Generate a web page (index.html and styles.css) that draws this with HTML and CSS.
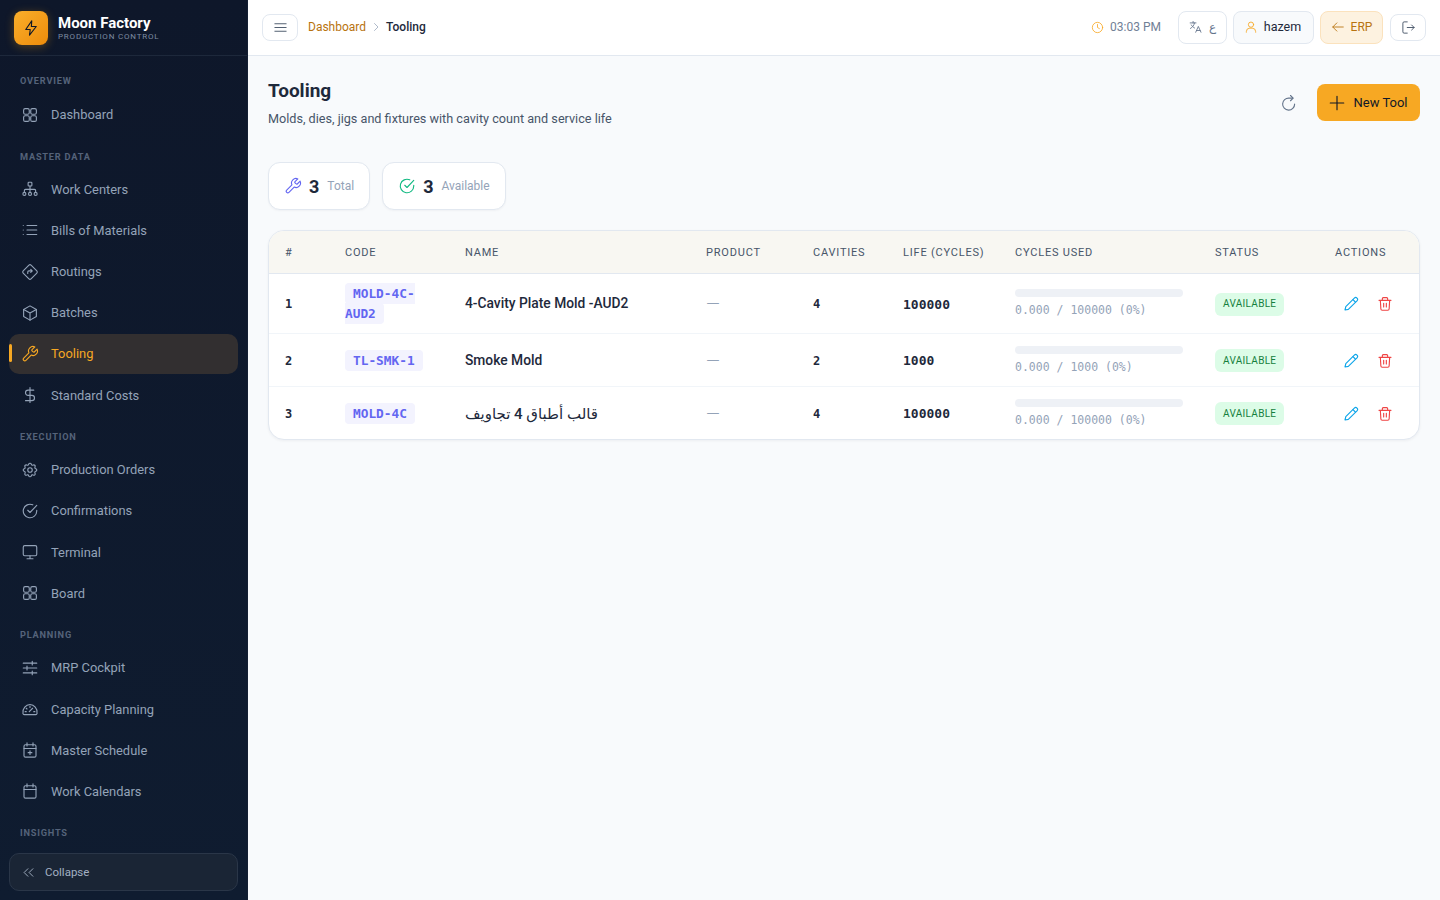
FILE: index.html
```html
<!DOCTYPE html>
<html lang="en">
<head>
  <meta charset="UTF-8">
  <meta name="viewport" content="width=device-width, initial-scale=1.0">
  <title>Tooling - Moon Factory</title>
  <link rel="stylesheet" href="styles.css">
</head>
<body>
  <!-- Icon sprite -->
  <svg class="sprite" xmlns="http://www.w3.org/2000/svg">
    <symbol id="i-grid" viewBox="0 0 24 24"><rect x="3.5" y="3.5" width="7.5" height="7.5" rx="2"/><rect x="13" y="3.5" width="7.5" height="7.5" rx="2"/><rect x="3.5" y="13" width="7.5" height="7.5" rx="2"/><rect x="13" y="13" width="7.5" height="7.5" rx="2"/></symbol>
    <symbol id="i-tree" viewBox="0 0 24 24"><rect x="9.5" y="3" width="5" height="5" rx="1"/><circle cx="4.5" cy="18.5" r="2"/><circle cx="12" cy="18.5" r="2"/><circle cx="19.5" cy="18.5" r="2"/><path d="M12 8v8.500M4.500 16.500V14a1.500 1.500 0 0 1 1.500-1.500h12a1.500 1.500 0 0 1 1.500 1.500v2.500"/></symbol>
    <symbol id="i-list" viewBox="0 0 24 24"><path d="M8 6h13M8 12h13M8 18h13M3 6h.01M3 12h.01M3 18h.01"/></symbol>
    <symbol id="i-route" viewBox="0 0 24 24"><path d="M10.600 2.900a2 2 0 0 1 2.800 0l7.700 7.700a2 2 0 0 1 0 2.800l-7.700 7.700a2 2 0 0 1-2.800 0l-7.700-7.700a2 2 0 0 1 0-2.800z"/><path d="M9 14v-2a1.500 1.500 0 0 1 1.500-1.500H15M13 8.500l2 2-2 2"/></symbol>
    <symbol id="i-box" viewBox="0 0 24 24"><path d="M12 2.500l8.500 4.800v9.400L12 21.500l-8.500-4.800V7.300z"/><path d="M3.500 7.300L12 12l8.500-4.700M12 12v9.500"/></symbol>
    <symbol id="i-tool" viewBox="0 0 24 24"><path d="M14.700 6.300a1 1 0 0 0 0 1.400l1.600 1.600a1 1 0 0 0 1.400 0l3.770-3.770a6 6 0 0 1-7.940 7.940l-6.910 6.910a2.120 2.120 0 0 1-3-3l6.910-6.910a6 6 0 0 1 7.940-7.940l-3.760 3.760z"/></symbol>
    <symbol id="i-dollar" viewBox="0 0 24 24"><path d="M12 2v20M17 5.500H9.500a3.500 3.500 0 0 0 0 7h5a3.500 3.500 0 0 1 0 7H6"/></symbol>
    <symbol id="i-gear" viewBox="0 0 24 24"><path d="M10.300 4.300c.4-1.800 3-1.800 3.400 0a1.700 1.700 0 0 0 2.600 1.100c1.500-.9 3.300.8 2.400 2.400a1.700 1.700 0 0 0 1 2.500c1.800.4 1.800 3 0 3.400a1.700 1.700 0 0 0-1 2.600c.9 1.500-.9 3.300-2.400 2.400a1.700 1.700 0 0 0-2.600 1c-.4 1.800-3 1.800-3.400 0a1.700 1.700 0 0 0-2.600-1c-1.500.9-3.300-.9-2.400-2.400a1.700 1.700 0 0 0-1-2.600c-1.800-.4-1.800-3 0-3.400a1.700 1.700 0 0 0 1-2.500c-.9-1.600.9-3.300 2.400-2.400a1.700 1.700 0 0 0 2.600-1.100z"/><circle cx="12" cy="12" r="3"/></symbol>
    <symbol id="i-check" viewBox="0 0 24 24"><path d="M21 11.100v.9a9 9 0 1 1-5.300-8.200"/><path d="M9 11l3 3 9-9.500"/></symbol>
    <symbol id="i-screen" viewBox="0 0 24 24"><rect x="3" y="3.500" width="18" height="13.500" rx="2"/><path d="M8 21h8M12 17v4"/></symbol>
    <symbol id="i-sliders" viewBox="0 0 24 24"><path d="M3 5.500h18M3 12h18M3 18.500h18M15 3v5M8 9.500v5M15 16v5"/></symbol>
    <symbol id="i-gauge" viewBox="0 0 24 24"><path d="M4.500 19.500h15a2 2 0 0 0 1.800-2.700A9.800 9.800 0 0 0 12 6a9.800 9.800 0 0 0-9.300 10.800 2 2 0 0 0 1.800 2.700z"/><path d="M11 15.500l4.500-4.500M7 11l1 1M12 8.500v1.500M5.500 15.500H7M17 15.500h1.500"/></symbol>
    <symbol id="i-calplus" viewBox="0 0 24 24"><rect x="4" y="5" width="16" height="16.500" rx="2"/><path d="M8 2.500v4M16 2.500v4M4 10h16M12 13v5M9.500 15.500h5"/></symbol>
    <symbol id="i-cal" viewBox="0 0 24 24"><rect x="4" y="5" width="16" height="16.500" rx="2"/><path d="M8 2.500v4M16 2.500v4M4 10h16"/></symbol>
    <symbol id="i-chevrons" viewBox="0 0 24 24"><path d="M11 6L5 12l6 6M19 6l-6 6 6 6"/></symbol>
    <symbol id="i-menu" viewBox="0 0 24 24"><path d="M3 6h18M3 12h18M3 18h18"/></symbol>
    <symbol id="i-chev" viewBox="0 0 24 24"><path d="M9 5l7 7-7 7"/></symbol>
    <symbol id="i-clock" viewBox="0 0 24 24"><circle cx="12" cy="12" r="9.500"/><path d="M12 6.500V12l3.500 2"/></symbol>
    <symbol id="i-lang" viewBox="0 0 24 24"><path d="M2 5h10M7 2.500V5M9.500 5c-1 4.500-3.500 7.500-7 9.500M4 8.500c1.200 2.300 3 4 5.500 5.200M11.500 21l4.500-10 4.500 10M13 18h6"/></symbol>
    <symbol id="i-user" viewBox="0 0 24 24"><circle cx="12" cy="8" r="4.500"/><path d="M4 21v-1a6 6 0 0 1 6-6h4a6 6 0 0 1 6 6v1"/></symbol>
    <symbol id="i-back" viewBox="0 0 24 24"><path d="M21 12H3M10 5l-7 7 7 7"/></symbol>
    <symbol id="i-logout" viewBox="0 0 24 24"><path d="M10 3H5a2 2 0 0 0-2 2v14a2 2 0 0 0 2 2h5M10 12h11M17 8l4 4-4 4"/></symbol>
    <symbol id="i-refresh" viewBox="0 0 24 24"><path d="M19.500 13.500A8 8 0 1 1 12 5.500h5"/><path d="M14 2l3.500 3.500L14 9"/></symbol>
    <symbol id="i-plus" viewBox="0 0 24 24"><path d="M12 3v18M3 12h18"/></symbol>
    <symbol id="i-pencil" viewBox="0 0 24 24"><path d="M3 21l1.200-5L17 3.200a2.800 2.800 0 0 1 4 4L8 20z"/><path d="M15 5.500l3.500 3.500"/></symbol>
    <symbol id="i-trash" viewBox="0 0 24 24"><path d="M3 6.500h18M8 6.500V4a1.500 1.500 0 0 1 1.500-1.500h5A1.500 1.500 0 0 1 16 4v2.500M5 6.500l.8 13a2 2 0 0 0 2 1.900h8.400a2 2 0 0 0 2-1.900l.8-13M10 11v5.500M14 11v5.500"/></symbol>
    <symbol id="i-bolt" viewBox="0 0 24 24"><path d="M13 2.500L5 14h6l-1 7.500L19 10h-6.500z"/></symbol>
  </svg>

  <div class="app">
    <aside class="sidebar">
      <div class="brand">
        <div class="brand-logo"><svg class="icon"><use href="#i-bolt"/></svg></div>
        <div class="brand-text">
          <div class="brand-name">Moon Factory</div>
          <div class="brand-sub">PRODUCTION CONTROL</div>
        </div>
      </div>

      <nav class="side-nav">
        <div class="nav-label nav-label-first">OVERVIEW</div>
        <a class="nav-item" href="#"><svg class="icon"><use href="#i-grid"/></svg>Dashboard</a>

        <div class="nav-label">MASTER DATA</div>
        <a class="nav-item" href="#"><svg class="icon"><use href="#i-tree"/></svg>Work Centers</a>
        <a class="nav-item" href="#"><svg class="icon"><use href="#i-list"/></svg>Bills of Materials</a>
        <a class="nav-item" href="#"><svg class="icon"><use href="#i-route"/></svg>Routings</a>
        <a class="nav-item" href="#"><svg class="icon"><use href="#i-box"/></svg>Batches</a>
        <a class="nav-item active" href="#"><svg class="icon"><use href="#i-tool"/></svg>Tooling</a>
        <a class="nav-item" href="#"><svg class="icon"><use href="#i-dollar"/></svg>Standard Costs</a>

        <div class="nav-label">EXECUTION</div>
        <a class="nav-item" href="#"><svg class="icon"><use href="#i-gear"/></svg>Production Orders</a>
        <a class="nav-item" href="#"><svg class="icon"><use href="#i-check"/></svg>Confirmations</a>
        <a class="nav-item" href="#"><svg class="icon"><use href="#i-screen"/></svg>Terminal</a>
        <a class="nav-item" href="#"><svg class="icon"><use href="#i-grid"/></svg>Board</a>

        <div class="nav-label">PLANNING</div>
        <a class="nav-item" href="#"><svg class="icon"><use href="#i-sliders"/></svg>MRP Cockpit</a>
        <a class="nav-item" href="#"><svg class="icon"><use href="#i-gauge"/></svg>Capacity Planning</a>
        <a class="nav-item" href="#"><svg class="icon"><use href="#i-calplus"/></svg>Master Schedule</a>
        <a class="nav-item" href="#"><svg class="icon"><use href="#i-cal"/></svg>Work Calendars</a>

        <div class="nav-label">INSIGHTS</div>
      </nav>

      <div class="side-foot">
        <button class="collapse-btn"><svg class="icon"><use href="#i-chevrons"/></svg>Collapse</button>
      </div>
    </aside>

    <div class="main">
      <header class="topbar">
        <button class="btn-box menu-btn"><svg class="icon"><use href="#i-menu"/></svg></button>
        <div class="crumbs">
          <a href="#">Dashboard</a>
          <svg class="icon"><use href="#i-chev"/></svg>
          <span>Tooling</span>
        </div>
        <div class="topbar-right">
          <div class="clock"><svg class="icon"><use href="#i-clock"/></svg>03:03 PM</div>
          <button class="btn-box lang-btn"><svg class="icon"><use href="#i-lang"/></svg><span>ع</span></button>
          <button class="btn-box user-btn"><svg class="icon"><use href="#i-user"/></svg>hazem</button>
          <button class="btn-box erp-btn"><svg class="icon"><use href="#i-back"/></svg>ERP</button>
          <button class="btn-box menu-btn logout-btn"><svg class="icon"><use href="#i-logout"/></svg></button>
        </div>
      </header>

      <main class="content">
        <div class="page-head">
          <div>
            <h1>Tooling</h1>
            <p>Molds, dies, jigs and fixtures with cavity count and service life</p>
          </div>
          <div class="page-actions">
            <button class="refresh-btn"><svg class="icon"><use href="#i-refresh"/></svg></button>
            <button class="primary-btn"><svg class="icon"><use href="#i-plus"/></svg>New Tool</button>
          </div>
        </div>

        <div class="stats">
          <div class="stat"><svg class="icon stat-tool"><use href="#i-tool"/></svg><b>3</b><span>Total</span></div>
          <div class="stat"><svg class="icon stat-ok"><use href="#i-check"/></svg><b>3</b><span>Available</span></div>
        </div>

        <div class="table-card">
          <table>
            <thead>
              <tr>
                <th class="col-num">#</th>
                <th class="col-code">CODE</th>
                <th class="col-name">NAME</th>
                <th class="col-product">PRODUCT</th>
                <th class="col-cav">CAVITIES</th>
                <th class="col-life">LIFE (CYCLES)</th>
                <th class="col-used">CYCLES USED</th>
                <th class="col-status">STATUS</th>
                <th class="col-actions">ACTIONS</th>
              </tr>
            </thead>
            <tbody>
              <tr>
                <td class="num">1</td>
                <td><code>MOLD-4C-AUD2</code></td>
                <td class="name">4-Cavity Plate Mold -AUD2</td>
                <td class="dash">—</td>
                <td class="num">4</td>
                <td class="life">100000</td>
                <td class="used-cell"><div class="bar"></div><div class="used">0.000 / 100000 (0%)</div></td>
                <td><span class="badge">AVAILABLE</span></td>
                <td><div class="actions"><svg class="icon edit"><use href="#i-pencil"/></svg><svg class="icon del"><use href="#i-trash"/></svg></div></td>
              </tr>
              <tr>
                <td class="num">2</td>
                <td><code>TL-SMK-1</code></td>
                <td class="name">Smoke Mold</td>
                <td class="dash">—</td>
                <td class="num">2</td>
                <td class="life">1000</td>
                <td class="used-cell"><div class="bar"></div><div class="used">0.000 / 1000 (0%)</div></td>
                <td><span class="badge">AVAILABLE</span></td>
                <td><div class="actions"><svg class="icon edit"><use href="#i-pencil"/></svg><svg class="icon del"><use href="#i-trash"/></svg></div></td>
              </tr>
              <tr>
                <td class="num">3</td>
                <td><code>MOLD-4C</code></td>
                <td class="name name-ar" dir="rtl">قالب أطباق 4 تجاويف</td>
                <td class="dash">—</td>
                <td class="num">4</td>
                <td class="life">100000</td>
                <td class="used-cell"><div class="bar"></div><div class="used">0.000 / 100000 (0%)</div></td>
                <td><span class="badge">AVAILABLE</span></td>
                <td><div class="actions"><svg class="icon edit"><use href="#i-pencil"/></svg><svg class="icon del"><use href="#i-trash"/></svg></div></td>
              </tr>
            </tbody>
          </table>
        </div>
      </main>
    </div>
  </div>
</body>
</html>
```

FILE: styles.css
```css
* {
  padding: 0;
  margin: 0;
  box-sizing: border-box;
}

body {
  font-family: Roboto, "DejaVu Sans", sans-serif;
  font-size: 13px;
  color: #1e293b;
  background-color: #f8fafc;
  height: 900px;
  overflow: hidden;
}

.sprite {
  display: none;
}

.icon {
  width: 18px;
  height: 18px;
  flex: none;
  fill: none;
  stroke: currentColor;
  stroke-width: 1.5;
  stroke-linecap: round;
  stroke-linejoin: round;
}

button {
  font-family: inherit;
  cursor: pointer;
}

a {
  text-decoration: none;
}

.app {
  display: flex;
  height: 900px;
}

/* Sidebar */
.sidebar {
  width: 248px;
  flex: none;
  display: flex;
  flex-direction: column;
  height: 900px;
  background: linear-gradient(180deg, #0e172a, #0f1c30);
  overflow: hidden;
  border-right: 1px solid #141f33;
}

.brand {
  height: 56px;
  flex: none;
  display: flex;
  align-items: center;
  gap: 10px;
  padding-left: 14px;
  border-bottom: 1px solid #1d283b;
}

.brand-logo {
  width: 34px;
  height: 34px;
  border-radius: 8px;
  background: linear-gradient(135deg, #f9ae2b, #ee8c0b);
  box-shadow: 0 2px 10px rgba(245, 158, 11, 0.3);
  display: flex;
  align-items: center;
  justify-content: center;
  color: #111827;
}

.brand-text {
  padding-top: 2px;
}

.brand-name {
  font-size: 15px;
  font-weight: 700;
  line-height: 15px;
  color: #fff;
}

.brand-sub {
  font-size: 8px;
  line-height: 11px;
  letter-spacing: 0.8px;
  color: #7c8ba1;
}

.side-nav {
  flex: 1;
  min-height: 0;
  overflow: hidden;
  padding: 0 9px;
}

.nav-label {
  font-size: 9.200px;
  font-weight: 700;
  letter-spacing: 0.8px;
  line-height: 12px;
  color: #55637a;
  padding: 14.400px 0 7px 11px;
}

.nav-label-first {
  padding-top: 19px;
  padding-bottom: 8px;
}

.nav-item {
  position: relative;
  display: flex;
  align-items: center;
  gap: 12px;
  height: 39.200px;
  margin-bottom: 2px;
  padding-left: 12px;
  border-radius: 10px;
  font-size: 12.900px;
  color: #94a3b8;
}

.nav-item.active {
  background-color: #322f30;
  color: #f7a823;
}

.nav-item.active::before {
  content: "";
  position: absolute;
  left: 0;
  top: 10px;
  width: 3px;
  height: 18px;
  border-radius: 2px;
  background-color: #f7a823;
}

.side-foot {
  flex: none;
  height: 47px;
  padding: 0 9px;
  position: relative;
}

.collapse-btn {
  width: 100%;
  height: 38px;
  display: flex;
  align-items: center;
  gap: 9px;
  padding-left: 11px;
  font-size: 11.500px;
  color: #a3b0c2;
  background-color: #1a2535;
  border: 1px solid #2a3648;
  border-radius: 10px;
}

.collapse-btn .icon {
  width: 15px;
  height: 15px;
}

/* Top bar */
.main {
  flex: 1;
  min-width: 0;
  display: flex;
  flex-direction: column;
}

.topbar {
  height: 56px;
  flex: none;
  display: flex;
  align-items: center;
  padding: 0 14px;
  background-color: #fff;
  border-bottom: 1px solid #e2e8f0;
}

.btn-box {
  height: 33px;
  display: flex;
  align-items: center;
  gap: 6px;
  padding-bottom: 2px;
  background-color: #fff;
  border: 1px solid #e2e8f0;
  border-radius: 8px;
  font-size: 12px;
  color: #64748b;
}

.menu-btn {
  width: 36px;
  height: 27px;
  justify-content: center;
  padding-bottom: 0;
  color: #475569;
}

.menu-btn .icon {
  width: 15px;
  height: 15px;
}

.logout-btn {
  margin-left: 1px;
}

.crumbs {
  display: flex;
  align-items: center;
  gap: 4px;
  margin-left: 10px;
  padding-bottom: 2px;
  font-size: 12px;
}

.crumbs a {
  color: #b8730f;
}

.crumbs .icon {
  width: 12px;
  height: 12px;
  color: #94a3b8;
}

.crumbs span {
  font-weight: 500;
  color: #1e293b;
}

.topbar-right {
  margin-left: auto;
  display: flex;
  align-items: center;
  gap: 6px;
}

.clock {
  display: flex;
  align-items: center;
  gap: 6px;
  margin-right: 11px;
  padding-bottom: 1px;
  font-size: 12px;
  color: #718096;
}

.clock .icon {
  width: 13px;
  height: 13px;
  color: #f7a823;
}

.lang-btn {
  width: 49px;
  justify-content: center;
}

.lang-btn .icon,
.erp-btn .icon,
.user-btn .icon {
  width: 14px;
  height: 14px;
}

.user-btn {
  width: 81px;
  justify-content: center;
  padding-right: 2px;
  background-color: #f8fafc;
  font-size: 12.500px;
  color: #1e293b;
}

.user-btn .icon {
  color: #f7a823;
}

.erp-btn {
  width: 63px;
  justify-content: center;
  background-color: #fdf2e0;
  border-color: #fbe2bd;
  color: #b8730f;
}

/* Page */
.content {
  flex: 1;
  padding: 20px;
}

.page-head {
  display: flex;
  align-items: center;
  justify-content: space-between;
}

h1 {
  font-size: 19px;
  line-height: 30px;
  font-weight: 700;
  color: #1e293b;
}

.page-head p {
  font-size: 12.650px;
  line-height: 20px;
  margin-top: 3px;
  color: #475569;
}

.page-actions {
  display: flex;
  align-items: center;
  gap: 19px;
}

.refresh-btn {
  background: none;
  border: none;
  display: flex;
  color: #64748b;
}

.primary-btn {
  height: 37px;
  width: 103px;
  display: flex;
  align-items: center;
  justify-content: center;
  gap: 7px;
  padding-right: 2px;
  border: none;
  border-radius: 8px;
  background-color: #f7a823;
  font-size: 13px;
  color: #111827;
}

.primary-btn .icon {
  margin-left: 1px;
}

.stats {
  display: flex;
  gap: 12px;
  margin-top: 33px;
}

.stat {
  height: 48px;
  display: flex;
  align-items: center;
  gap: 6px;
  padding: 0 15px;
  background-color: #fff;
  border: 1px solid #e2e8f0;
  border-radius: 12px;
  box-shadow: 0 1px 2px rgba(15, 23, 42, 0.04);
}

.stat b {
  margin-left: 1px;
  font-size: 18px;
  font-weight: 700;
  color: #1e293b;
}

.stat span {
  margin-left: 2px;
  font-size: 12px;
  color: #94a3b8;
}

.stat-tool {
  color: #6366f1;
}

.stat-ok {
  color: #10b981;
}

/* Table */
.table-card {
  margin-top: 20px;
  background-color: #fff;
  border: 1px solid #e2e8f0;
  border-radius: 16px;
  box-shadow: 0 1px 3px rgba(15, 23, 42, 0.05);
  overflow: hidden;
}

table {
  width: 100%;
  border-collapse: collapse;
  table-layout: fixed;
}

th {
  height: 42px;
  padding: 1px 16px 0;
  text-align: left;
  white-space: nowrap;
  font-size: 11px;
  font-weight: 400;
  letter-spacing: 0.8px;
  color: #475569;
  background-color: #f8f7f2;
  border-bottom: 1px solid #e2e8f0;
}

.col-num { width: 60px; }
.col-code { width: 120px; }
.col-name { width: 241px; }
.col-product { width: 107px; }
.col-cav { width: 90px; }
.col-life { width: 112px; }
.col-used { width: 200px; }
.col-status { width: 120px; }
.col-actions { width: 100px; }

td {
  padding: 2px 16px 0;
  height: 53px;
  vertical-align: middle;
  border-bottom: 1px solid #f1f5f9;
}

tbody tr:first-child td {
  height: 60px;
}

tbody tr:last-child td {
  border-bottom: none;
}

.num {
  font-family: "DejaVu Sans Mono", monospace;
  font-size: 12px;
  font-weight: 700;
}

code {
  font-family: "DejaVu Sans Mono", monospace;
  font-size: 12.800px;
  font-weight: 700;
  line-height: 20px;
  padding: 3px 8px;
  border-radius: 4px;
  color: #6366f1;
  background-color: #f3f3fe;
}

td.name {
  padding-top: 0;
  font-size: 13.800px;
  font-weight: 500;
  color: #1e293b;
  text-align: left;
}

td.name-ar {
  padding-top: 2px;
  font-size: 15px;
}

.dash {
  font-size: 18px;
  font-weight: 300;
  line-height: 1;
  color: #94a3b8;
}

.life {
  font-family: "DejaVu Sans Mono", monospace;
  font-size: 13px;
  font-weight: 700;
}

td.used-cell {
  padding-top: 0;
}

.bar {
  height: 8px;
  border-radius: 4px;
  background-color: #eef1f6;
}

.used {
  margin-top: 6px;
  font-family: "DejaVu Sans Mono", monospace;
  font-size: 11.500px;
  line-height: 14px;
  color: #94a3b8;
}

.badge {
  display: inline-block;
  padding: 5.500px 8px;
  border-radius: 6px;
  font-size: 10px;
  line-height: 12px;
  letter-spacing: 0.3px;
  color: #15803d;
  background-color: #dcfce7;
}

.actions {
  display: flex;
  gap: 18px;
  padding-left: 8px;
}

.actions .icon {
  width: 16px;
  height: 16px;
  stroke-width: 1.7;
}

.edit {
  color: #0ea5e9;
}

.del {
  color: #ef4444;
}
```
